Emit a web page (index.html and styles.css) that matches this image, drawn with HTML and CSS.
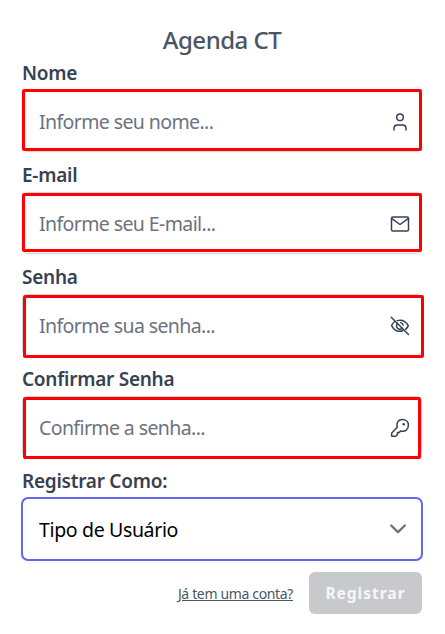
FILE: index.html
```html
<!DOCTYPE html>
<html lang="pt-BR">
<head>
  <meta charset="UTF-8">
  <title>Agenda CT</title>
  <link rel="stylesheet" href="styles.css">
</head>
<body>
  <main>
    <h1>Agenda CT</h1>

    <form class="register-form">
      <div class="form-group">
        <label for="name">Nome</label>
        <div class="field field-name">
          <input type="text" id="name" placeholder="Informe seu nome...">
          <svg class="icon" viewBox="0 0 20 20">
            <circle cx="10" cy="5.2" r="3.3"/>
            <path d="M4 18v-1.7a3.3 3.3 0 0 1 3.3-3.3h5.4a3.3 3.3 0 0 1 3.3 3.3V18"/>
          </svg>
        </div>
      </div>

      <div class="form-group">
        <label for="email">E-mail</label>
        <div class="field field-email">
          <input type="email" id="email" placeholder="Informe seu E-mail...">
          <svg class="icon" viewBox="0 0 20 20">
            <rect x="1.5" y="3" width="17" height="14" rx="1.5"/>
            <path d="M1.8 4.7 10 10.5l8.2-5.8"/>
          </svg>
        </div>
      </div>

      <div class="form-group">
        <label for="password">Senha</label>
        <div class="field field-password">
          <input type="password" id="password" placeholder="Informe sua senha...">
          <svg class="icon" viewBox="0 0 20 20">
            <path d="M1.2 1.2l17.3 17.3"/>
            <path d="M7.2 4.6c4.8-1.3 8.7.8 11.1 5-.6 1.5-1.5 2.7-2.7 3.7M4.7 5.5c-1.5 1-2.5 2.4-3.1 4.1 2.4 4.7 6.3 6.6 11.2 5.2"/>
            <path d="M7.5 7.5a3.2 3.2 0 1 0 4.8 4.8M10.7 6.7a3 3 0 0 1 2.4 2.4"/>
          </svg>
        </div>
      </div>

      <div class="form-group">
        <label for="confirm">Confirmar Senha</label>
        <div class="field field-confirm">
          <input type="password" id="confirm" placeholder="Confirme a senha...">
          <svg class="icon" viewBox="0 0 20 20">
            <path d="M7.2 9.2C6 4.7 8.3 1.5 12.4 1.5c3.5 0 6 2.4 6 5.8 0 4.2-3.1 6.7-7.5 5.6l-1.7 1.5H7.5v2.1l-1.9 1.8H2.1a.5.5 0 0 1-.5-.5v-2.5z"/>
            <circle class="key-hole" cx="13.7" cy="6.3" r="1.2"/>
          </svg>
        </div>
      </div>

      <div class="form-group">
        <label for="type">Registrar Como:</label>
        <div class="field field-type">
          <select id="type">
            <option>Tipo de Usuário</option>
          </select>
          <svg class="arrow" viewBox="0 0 20 20">
            <path d="M3.8 6.8 10 12.9l6.2-6.1"/>
          </svg>
        </div>
      </div>

      <div class="actions">
        <a href="#">Já tem uma conta?</a>
        <button type="submit" disabled>Registrar</button>
      </div>
    </form>
  </main>
</body>
</html>
```

FILE: styles.css
```css
:root {
  --text: #374151;
  --placeholder: #6b7280;
  --border: #d1d5db;
  --icon: #334155;
  --required: #ff0000;
  --focus: #6366f1;
}

* {
  margin: 0;
  padding: 0;
  box-sizing: border-box;
}

body {
  font-family: 'Segoe UI', 'Noto Sans', sans-serif;
  font-size: 20px;
  background-color: white;
  color: var(--text);
}

main {
  padding: 22px 23px 0 22px;
}

h1 {
  height: 36px;
  line-height: 36px;
  font-size: 24px;
  font-weight: 500;
  letter-spacing: -0.5px;
  color: #4b5563;
  text-align: center;
  white-space: nowrap;
}

.form-group {
  height: 102px;
}

label {
  display: block;
  height: 32px;
  line-height: 30px;
  font-size: 19px;
  font-weight: 600;
  letter-spacing: -0.25px;
  white-space: nowrap;
}

.field {
  position: relative;
  display: flex;
  align-items: center;
  height: 62px;
  padding-right: 11px;
  border: 1px solid var(--border);
  border-radius: 6px;
  box-shadow: 0 1px 2px rgba(0, 0, 0, 0.05);
}

/* red frame around the required fields */
.field::after {
  content: '';
  position: absolute;
  inset: -2px -1px 0 -1px;
  border: 3px solid var(--required);
  border-radius: 2px;
  pointer-events: none;
}

.field-email::after {
  inset: 0 -1px 1px -1px;
}

.field-password::after {
  inset: 0 -3px -3px 0;
}

.field-confirm::after {
  inset: 0 0 -2px 0;
}

.field-type::after {
  inset: -2px;
  border: 2px solid var(--focus);
  border-radius: 7px;
}

input,
select {
  flex: 1;
  min-width: 0;
  height: 60px;
  padding: 0 16px;
  border: none;
  outline: none;
  background: transparent;
  font-family: inherit;
  font-size: 19.5px;
  letter-spacing: -0.6px;
  color: black;
}

select {
  appearance: none;
  letter-spacing: -0.35px;
}

input::placeholder {
  color: var(--placeholder);
  opacity: 1;
}

.icon {
  width: 20px;
  height: 20px;
  margin-top: 2px;
  fill: none;
  stroke: var(--icon);
  stroke-width: 1.5;
  stroke-linecap: round;
  stroke-linejoin: round;
}

.key-hole {
  fill: var(--icon);
  stroke: none;
}

.arrow {
  width: 22px;
  height: 22px;
  margin-right: 1px;
  fill: none;
  stroke: var(--placeholder);
  stroke-width: 2.1;
  stroke-linecap: round;
  stroke-linejoin: round;
}

.actions {
  display: flex;
  justify-content: flex-end;
  align-items: center;
  gap: 16px;
  padding-top: 4px;
}

.actions a {
  font-size: 14px;
  letter-spacing: -0.35px;
  color: #4b5563;
  text-decoration: underline;
  white-space: nowrap;
}

button {
  width: 113px;
  height: 42px;
  border: none;
  border-radius: 6px;
  background-color: #c8c9cd;
  color: #f6f6f7;
  font-family: inherit;
  font-size: 15.5px;
  font-weight: 700;
  letter-spacing: 1px;
}
```
